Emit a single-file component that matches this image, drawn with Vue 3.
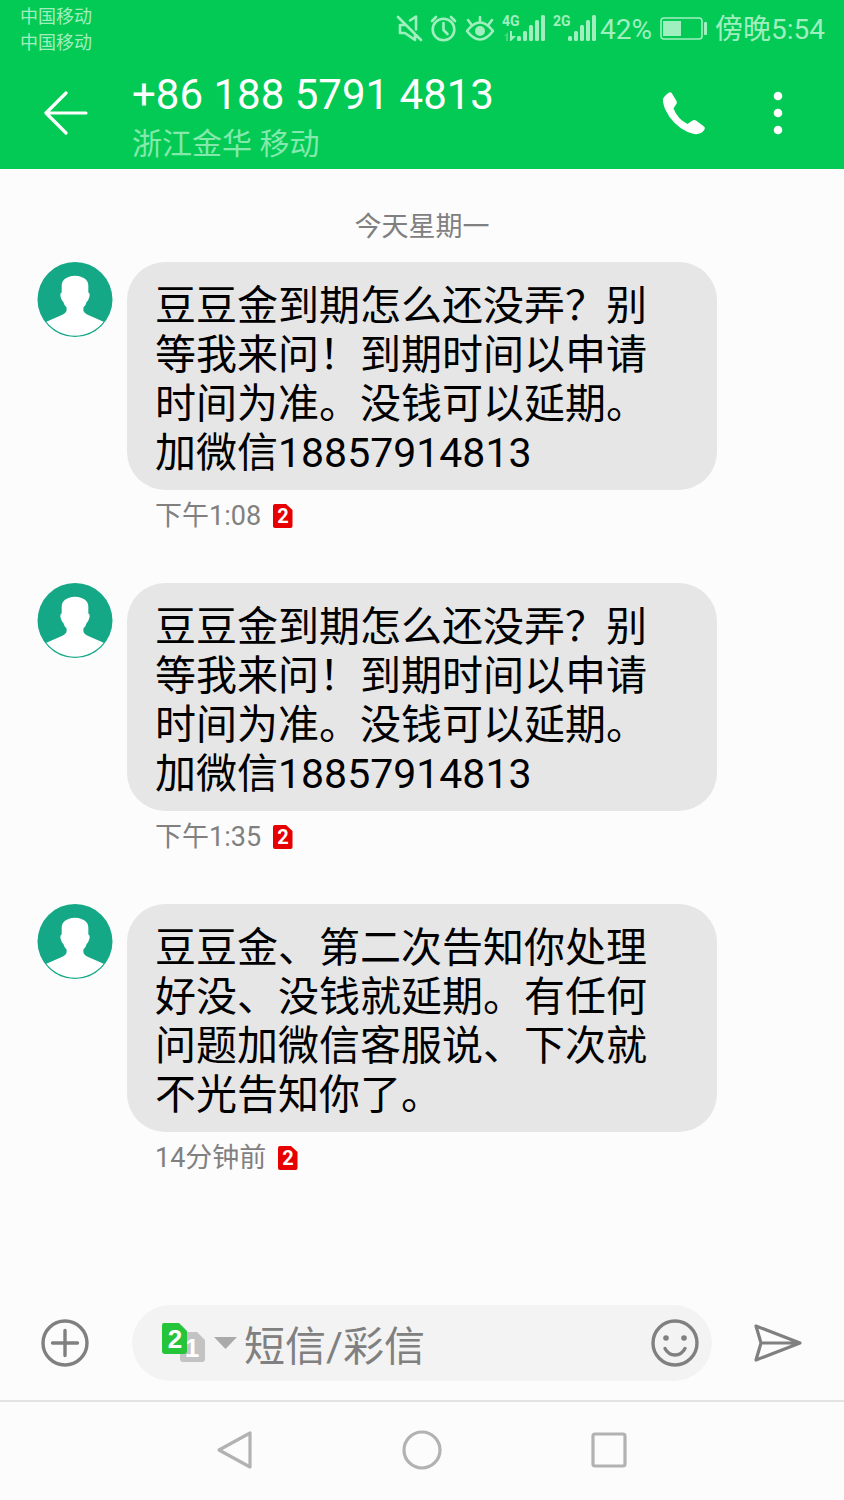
<script setup>
import { ref } from 'vue'

const carriers = ['中国移动', '中国移动']
const draft = ref('')
const messages = [
  { id: 1, text: '豆豆金到期怎么还没弄？别等我来问！到期时间以申请时间为准。没钱可以延期。加微信18857914813', time: '下午1:08' },
  { id: 2, text: '豆豆金到期怎么还没弄？别等我来问！到期时间以申请时间为准。没钱可以延期。加微信18857914813', time: '下午1:35' },
  { id: 3, text: '豆豆金、第二次告知你处理好没、没钱就延期。有任何问题加微信客服说、下次就不光告知你了。', time: '14分钟前' }
]
</script>

<template>
  <div class="screen">
    <header class="top">
      <div class="status">
        <div class="carriers">
          <span v-for="(name, i) in carriers" :key="i">{{ name }}</span>
        </div>
        <div class="indicators">
          <svg class="indicator-icons" width="200" height="32" viewBox="396 13 200 32" aria-hidden="true">
            <g fill="none" stroke="currentColor" stroke-width="2.6" stroke-linecap="round" stroke-linejoin="round">
              <path d="M398 17L421 40M405 25h-5v8h5l10 7v-6M410 20.500l6-4v13" />
              <circle cx="443.500" cy="29.500" r="10.800" />
              <path d="M443.500 23v7l4 4M432 21l4-4M455 21l-4-4" />
              <path d="M467 31q13-17 26 0q-13 17-26 0ZM480 17v4M468 20l3 4M492 20l-3 4" />
            </g>
            <circle cx="480" cy="31" r="5" fill="currentColor" />
            <g fill="currentColor">
              <path d="M504 36l4-4v9h-2v-5z" opacity=".4" />
              <path d="M510 31h2v5h4l-5 5h-1z" />
              <rect x="517" y="36" width="4" height="5" rx="1.500" />
              <rect x="523" y="31" width="4" height="10" rx="1.500" />
              <rect x="529" y="25" width="4" height="16" rx="1.500" />
              <rect x="535" y="20" width="4" height="21" rx="1.500" />
              <rect x="541" y="15" width="4" height="26" rx="1.500" />
              <rect x="568" y="36" width="4" height="5" rx="1.500" />
              <rect x="574" y="31" width="4" height="10" rx="1.500" />
              <rect x="580" y="25" width="4" height="16" rx="1.500" />
              <rect x="586" y="20" width="4" height="21" rx="1.500" />
              <rect x="592" y="15" width="4" height="26" rx="1.500" />
              <text class="network" x="502" y="26">4G</text>
              <text class="network" x="553" y="26">2G</text>
            </g>
          </svg>
          <span class="percent">42%</span>
          <svg width="49" height="26" viewBox="0 0 49 26" aria-hidden="true">
            <rect x="1" y="2" width="41" height="21" rx="3" fill="none" stroke="currentColor" stroke-width="1.600" />
            <rect x="3" y="5" width="18" height="15" fill="currentColor" />
            <rect x="44" y="6" width="3" height="13" rx="1" fill="currentColor" />
          </svg>
          <time>傍晚5:54</time>
        </div>
      </div>

      <div class="app-bar">
        <button type="button" class="icon-button" aria-label="返回">
          <svg width="44" height="44" viewBox="0 0 44 44" fill="none" stroke="currentColor" stroke-width="3.200" stroke-linecap="round" stroke-linejoin="round">
            <path d="M22 2L2 22l20 20M2 22h40" />
          </svg>
        </button>
        <div class="contact">
          <h1>+86 188 5791 4813</h1>
          <p>浙江金华 移动</p>
        </div>
        <button type="button" class="icon-button" aria-label="拨打电话">
          <svg width="44" height="44" viewBox="0 0 44 44" fill="currentColor">
            <path d="M7 1.500Q8.500.500 10 2.500L14.500 10Q15.500 12 14 13.500L11.500 17.500Q15.500 28 25.500 33L30.500 29.500Q32 28.500 34 29.500L42 35.500Q43.500 36.500 42.500 38.500Q39 44 32 43Q18 40 7.500 26Q0 14 1 8Q2 5 7 1.500Z" />
          </svg>
        </button>
        <button type="button" class="icon-button more" aria-label="更多">
          <svg width="10" height="44" viewBox="0 0 10 44" fill="currentColor">
            <circle cx="5" cy="5" r="4.300" /><circle cx="5" cy="22" r="4.300" /><circle cx="5" cy="39" r="4.300" />
          </svg>
        </button>
      </div>
    </header>

    <main class="thread">
      <h2>今天星期一</h2>
      <article v-for="m in messages" :key="m.id" class="message">
        <svg width="76" height="75" viewBox="0 0 76 76" aria-hidden="true">
          <circle cx="38" cy="38" r="38" fill="#14a886" />
          <path fill="#fff" d="M38 14Q52 15 51.500 25V31Q54 32 52 37Q51 40 50 40Q49 44 46.500 46V49Q47 52 52 54L67 60.500A36.800 36.800 0 0 1 9 60.500L24 54Q29 52 29.500 49V46Q27 44 26 40Q25 40 24 37Q22 32 24.500 31V25Q24 15 38 14Z" />
        </svg>
        <div class="body">
          <p class="bubble">{{ m.text }}</p>
          <div class="meta">
            <time>{{ m.time }}</time>
            <svg width="20" height="24" viewBox="0 0 20 24" role="img" aria-label="SIM 2">
              <path d="M2 0H13L19.500 6V22Q19.500 24 17.500 24H2Q0 24 0 22V2Q0 0 2 0Z" fill="#e60000" />
              <text class="badge-number" x="10" y="19">2</text>
            </svg>
          </div>
        </div>
      </article>
    </main>

    <form class="composer" @submit.prevent>
      <button type="button" class="icon-button" aria-label="添加附件">
        <svg width="48" height="48" viewBox="0 0 48 48" fill="none" stroke="currentColor" stroke-width="3.400" stroke-linecap="round">
          <circle cx="24" cy="24" r="22" /><path d="M24 11.500v25M11.500 24h25" />
        </svg>
      </button>
      <div class="field">
        <button type="button" class="icon-button" aria-label="选择 SIM 卡">
          <svg width="75" height="40" viewBox="0 0 75 40">
            <path d="M20 9H35L43 17V36Q43 39 40 39H21Q18 39 18 36V11Q18 9 20 9Z" fill="#c3c3c3" />
            <text class="sim-number" x="30" y="34">1</text>
            <path d="M2 0H17L25 8V28Q25 31 22 31H3Q0 31 0 28V2Q0 0 2 0Z" fill="#25c43b" />
            <text class="sim-number" x="13" y="25">2</text>
            <path d="M52 14H75L63.500 26Z" fill="#aaa" />
          </svg>
        </button>
        <input v-model="draft" type="text" placeholder="短信/彩信" aria-label="短信/彩信" />
        <button type="button" class="icon-button" aria-label="表情">
          <svg width="48" height="48" viewBox="0 0 48 48" fill="none" stroke="currentColor" stroke-width="3.400" stroke-linecap="round">
            <circle cx="24" cy="24" r="22" />
            <path d="M14 29.500q3.500 6.500 10 6.500t10-6.500" />
            <g fill="currentColor" stroke="none"><circle cx="15" cy="19" r="2.800" /><circle cx="33" cy="19" r="2.800" /></g>
          </svg>
        </button>
      </div>
      <button type="submit" class="icon-button" aria-label="发送">
        <svg width="48" height="40" viewBox="0 0 48 40" fill="none" stroke="currentColor" stroke-width="3.200" stroke-linejoin="round">
          <path d="M2 3L46 20L2 37L7 20ZM7 20H46" />
        </svg>
      </button>
    </form>

    <nav class="system-nav" aria-label="系统导航">
      <button type="button" class="icon-button" aria-label="返回上一页">
        <svg width="40" height="40" viewBox="0 0 40 40"><path d="M35 3V37L4 20Z" /></svg>
      </button>
      <button type="button" class="icon-button" aria-label="主屏幕">
        <svg width="40" height="40" viewBox="0 0 40 40"><circle cx="20" cy="20" r="18" /></svg>
      </button>
      <button type="button" class="icon-button" aria-label="最近任务">
        <svg width="40" height="40" viewBox="0 0 40 40"><rect x="4" y="4" width="32" height="32" rx="2" /></svg>
      </button>
    </nav>
  </div>
</template>

<style>
body {
  background: #fcfcfc;
}
</style>

<style scoped>
.screen {
  min-height: 100vh;
  display: flex;
  flex-direction: column;
  background: #fcfcfc;
  color: #000;
  font-family: Roboto, "Noto Sans CJK SC", sans-serif;
}

h1, h2, p {
  margin: 0;
  font-weight: 400;
}

svg {
  display: block;
  flex: none;
}

.icon-button {
  flex: none;
  padding: 0;
  border: 0;
  background: none;
  color: inherit;
  cursor: pointer;
}

.top {
  background: #03ca55;
  color: #fff;
}

.status {
  display: flex;
  justify-content: space-between;
  height: 58px;
  padding: 0 19px 0 20px;
  color: #a0efbf;
}

.carriers {
  display: flex;
  flex-direction: column;
  padding-top: 4px;
  font-size: 18px;
  line-height: 26px;
}

.indicators {
  display: flex;
  align-items: center;
  font-size: 28px;
  line-height: 32px;
}

.percent {
  margin: 0 8px 0 4px;
  padding-top: 2px;
}

.indicators time {
  margin-left: 6px;
  padding-top: 2px;
}

.network {
  font: bold 14px Roboto, sans-serif;
}

.app-bar {
  display: flex;
  align-items: center;
  height: 109px;
  padding: 0 61px 2px 44px;
}

.contact {
  flex: 1;
  margin-left: 44px;
  padding-top: 10px;
}

h1 {
  font-size: 42px;
  line-height: 52px;
}

.contact p {
  color: #84e9ad;
  font-size: 30px;
  line-height: 46px;
}

.more {
  margin-left: 67px;
}

.thread {
  flex: 1;
}

h2 {
  padding: 42px 0 18px;
  color: #808080;
  font-size: 27px;
  line-height: 33px;
  text-align: center;
}

.message {
  display: flex;
  gap: 14px;
  margin-bottom: 53px;
  padding: 0 127px 0 37px;
}

.body {
  flex: 1;
}

.bubble {
  padding: 20px 56px 12px 28px;
  border-radius: 38px;
  background: #e6e6e6;
  font-size: 41px;
  line-height: 49px;
}

.meta {
  display: flex;
  align-items: center;
  gap: 12px;
  height: 40px;
  padding: 0 28px;
  color: #808080;
  font-size: 27px;
  line-height: 28px;
}

.meta time {
  padding-top: 12px;
}

.meta svg {
  margin-top: 12px;
}

.badge-number,
.sim-number {
  fill: #fff;
  font-size: 20px;
  font-weight: 700;
  text-anchor: middle;
}

.sim-number {
  font-size: 26px;
}

.composer {
  display: flex;
  align-items: center;
  padding: 0 42px 19px 41px;
  color: #808080;
}

.field {
  flex: 1;
  display: flex;
  align-items: center;
  min-width: 0;
  height: 76px;
  margin: 0 42px 0 43px;
  padding: 0 13px 0 30px;
  border-radius: 38px;
  background: #f3f3f3;
}

input {
  flex: 1;
  min-width: 0;
  margin: 0 8px 0 7px;
  padding: 8px 0 0;
  border: 0;
  outline: 0;
  background: none;
  color: #000;
  font-family: inherit;
  font-size: 41px;
  line-height: 50px;
}

input::placeholder {
  color: #808080;
  opacity: 1;
}

.system-nav {
  display: flex;
  justify-content: center;
  align-items: center;
  gap: 147px;
  height: 96px;
  padding-bottom: 2px;
  border-top: 2px solid #e3e3e3;
}

.system-nav svg {
  fill: none;
  stroke: #b2b2b2;
  stroke-width: 3.2px;
  stroke-linejoin: round;
}
</style>
